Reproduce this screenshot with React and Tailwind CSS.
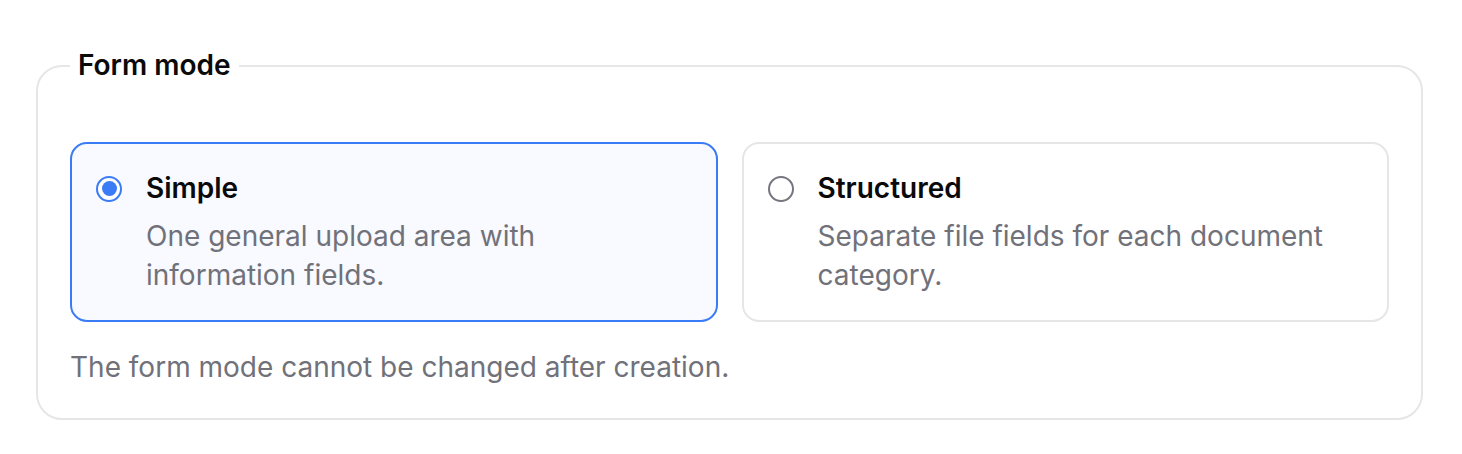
export default function App() {
    const options = [
        {
            id: 'simple',
            title: 'Simple',
            description: 'One general upload area with information fields.',
        },
        {
            id: 'structured',
            title: 'Structured',
            description: 'Separate file fields for each document category.',
        },
    ];
    const selected = 'simple';

    return (
        <div className="min-h-screen bg-white pl-9 pr-[39px] pt-[46px] font-['Inter',sans-serif]">
            <fieldset className="rounded-[26px] border-2 border-[#e6e6e9] px-[32px] pb-[31px]">
                <legend className="px-2 text-[28px] leading-[39px] font-semibold text-[#0a0a0a]">Form mode</legend>

                <div className="mt-[57px] grid grid-cols-2 gap-6">
                    {options.map((opt) => {
                        const active = opt.id === selected;
                        return (
                            <label
                                key={opt.id}
                                className={
                                    active
                                        ? 'flex gap-6 rounded-[17px] border-2 border-[#3b7bf6] bg-[#f8faff] px-6 pt-6 pb-[25px]'
                                        : 'flex gap-6 rounded-[17px] border-2 border-[#e6e6e9] bg-white px-6 pt-6 pb-[25px]'
                                }
                            >
                                <span className="flex h-[41px] items-center">
                                    {active ? (
                                        <span className="flex h-[26px] w-[26px] items-center justify-center rounded-full border-[2.5px] border-[#3b7bf6] bg-white">
                                            <span className="h-[15px] w-[15px] rounded-full bg-[#3b7bf6]" />
                                        </span>
                                    ) : (
                                        <span className="h-[26px] w-[26px] rounded-full border-2 border-[#76767e] bg-white" />
                                    )}
                                </span>
                                <span className="flex flex-col">
                                    <span className="text-[28px] leading-[41px] font-semibold text-[#0a0a0a]">{opt.title}</span>
                                    <span className="mt-[8px] text-[28px] leading-[39px] text-[#71717a]">{opt.description}</span>
                                </span>
                            </label>
                        );
                    })}
                </div>

                <p className="mt-[26px] text-[28px] leading-[39px] text-[#71717a]">
                    The form mode cannot be changed after creation.
                </p>
            </fieldset>
        </div>
    );
}
